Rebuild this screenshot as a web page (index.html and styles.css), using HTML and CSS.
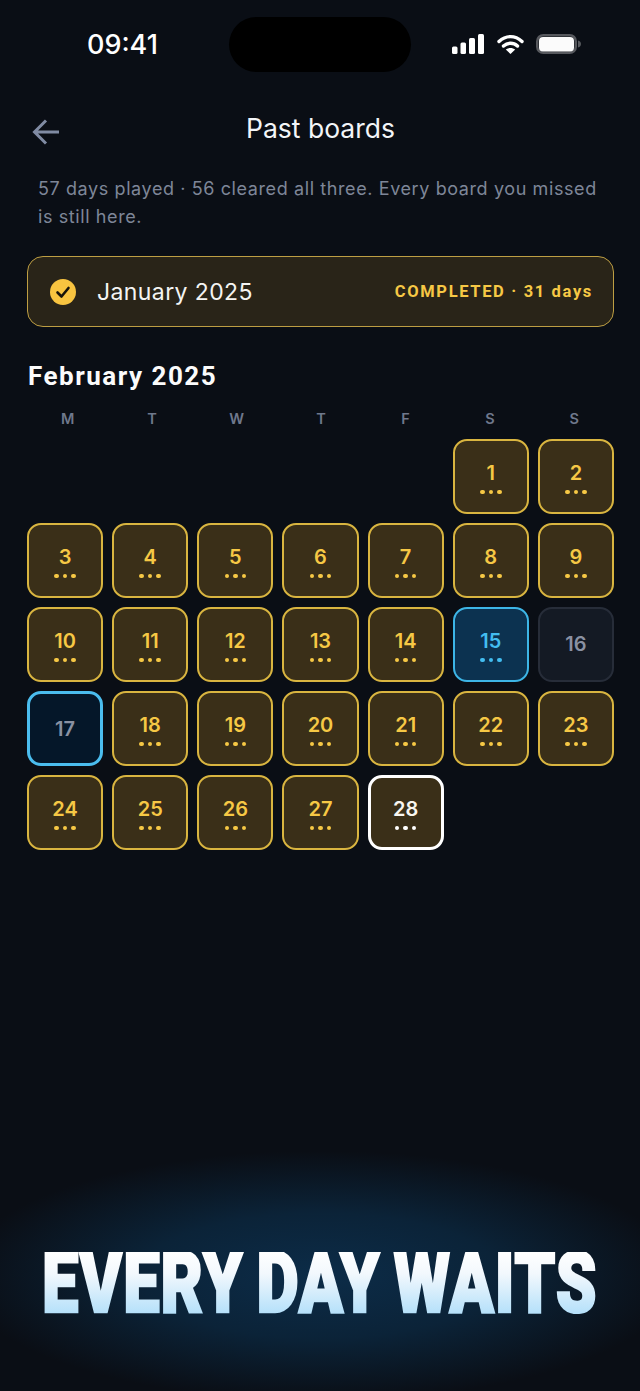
FILE: index.html
```html
<!DOCTYPE html>
<html lang="en">
<head>
<meta charset="utf-8">
<title>Past boards</title>
<link rel="stylesheet" href="styles.css">
</head>
<body>
<main class="screen">
  <header class="status">
    <span class="time">09:41</span>
    <span class="island"></span>
    <span class="status-icons">
      <svg class="sig" viewBox="0 0 32 20" width="32" height="20"><rect x="0" y="12.500" width="5.500" height="7.500" rx="1.500"/><rect x="8.500" y="8.500" width="5.500" height="11.500" rx="1.500"/><rect x="17" y="4" width="6" height="16" rx="1.500"/><rect x="26" y="0" width="6" height="20" rx="1.500"/></svg>
      <svg class="wifi" viewBox="0 0 27 20" width="27" height="20"><path d="M2 7.500C9 1 18 1 25 7.500"/><path d="M6.500 12C10.500 8.300 16.500 8.300 20.500 12"/><path class="wifi-dot" d="M13.500 20 8.800 15.600C11.500 13.300 15.500 13.300 18.200 15.600Z"/></svg>
      <svg class="batt" viewBox="0 0 45 20" width="45" height="20"><rect class="batt-shell" x="1.250" y="1.250" width="38.500" height="17.500" rx="6"/><rect class="batt-fill" x="3" y="3" width="35" height="14.500" rx="4"/><path class="batt-cap" d="M42 6.500v7c1.800-.5 3-1.800 3-3.500s-1.200-3-3-3.500z"/></svg>
    </span>
  </header>

  <nav class="nav">
    <svg class="back" viewBox="0 0 30 30" width="30" height="30"><path d="M28 15H4M15 3.500 3.500 15 15 26.500"/></svg>
    <h1 class="title">Past boards</h1>
  </nav>

  <p class="intro">57 days played · 56 cleared all three. Every board you missed is still here.</p>

  <section class="banner">
    <svg class="tick" viewBox="0 0 26 26" width="26" height="26"><circle cx="13" cy="13" r="13"/><path d="M7.500 13.500 11.500 17.500 18.500 9"/></svg>
    <span class="banner-month">January 2025</span>
    <span class="banner-state">COMPLETED · 31 days</span>
  </section>

  <h2 class="month">February 2025</h2>

  <div class="weekdays">
    <span>M</span><span>T</span><span>W</span><span>T</span><span>F</span><span>S</span><span>S</span>
  </div>

  <div class="grid">
    <div class="gap"></div><div class="gap"></div><div class="gap"></div><div class="gap"></div><div class="gap"></div>
    <div class="day"><b>1</b><i class="dots"><u></u><u></u><u></u></i></div>
    <div class="day"><b>2</b><i class="dots"><u></u><u></u><u></u></i></div>
    <div class="day"><b>3</b><i class="dots"><u></u><u></u><u></u></i></div>
    <div class="day"><b>4</b><i class="dots"><u></u><u></u><u></u></i></div>
    <div class="day"><b>5</b><i class="dots"><u></u><u></u><u></u></i></div>
    <div class="day"><b>6</b><i class="dots"><u></u><u></u><u></u></i></div>
    <div class="day"><b>7</b><i class="dots"><u></u><u></u><u></u></i></div>
    <div class="day"><b>8</b><i class="dots"><u></u><u></u><u></u></i></div>
    <div class="day"><b>9</b><i class="dots"><u></u><u></u><u></u></i></div>
    <div class="day"><b>10</b><i class="dots"><u></u><u></u><u></u></i></div>
    <div class="day"><b>11</b><i class="dots"><u></u><u></u><u></u></i></div>
    <div class="day"><b>12</b><i class="dots"><u></u><u></u><u></u></i></div>
    <div class="day"><b>13</b><i class="dots"><u></u><u></u><u></u></i></div>
    <div class="day"><b>14</b><i class="dots"><u></u><u></u><u></u></i></div>
    <div class="day blue"><b>15</b><i class="dots"><u></u><u></u><u></u></i></div>
    <div class="day idle"><b>16</b></div>
    <div class="day idle selected"><b>17</b></div>
    <div class="day"><b>18</b><i class="dots"><u></u><u></u><u></u></i></div>
    <div class="day"><b>19</b><i class="dots"><u></u><u></u><u></u></i></div>
    <div class="day"><b>20</b><i class="dots"><u></u><u></u><u></u></i></div>
    <div class="day"><b>21</b><i class="dots"><u></u><u></u><u></u></i></div>
    <div class="day"><b>22</b><i class="dots"><u></u><u></u><u></u></i></div>
    <div class="day"><b>23</b><i class="dots"><u></u><u></u><u></u></i></div>
    <div class="day"><b>24</b><i class="dots"><u></u><u></u><u></u></i></div>
    <div class="day"><b>25</b><i class="dots"><u></u><u></u><u></u></i></div>
    <div class="day"><b>26</b><i class="dots"><u></u><u></u><u></u></i></div>
    <div class="day"><b>27</b><i class="dots"><u></u><u></u><u></u></i></div>
    <div class="day today"><b>28</b><i class="dots"><u></u><u></u><u></u></i></div>
  </div>

  <footer class="promo">
    <span class="promo-text">EVERY DAY WAITS</span>
  </footer>
</main>
</body>
</html>
```

FILE: styles.css
```css
* { box-sizing: border-box; margin: 0; padding: 0; }
html, body { height: 100%; }
body {
  background: #0a0e15;
  font-family: Inter, "Liberation Sans", sans-serif;
  color: #fff;
  overflow: hidden;
}
.screen {
  height: 1391px;
  display: flex;
  flex-direction: column;
  padding: 17px 26px 0 27px;
}
.status {
  display: flex;
  align-items: center;
  height: 55px;
  flex: none;
}
.time {
  width: 202px;
  padding-left: 60px;
  font-size: 27px;
  font-weight: 500;
}
.island {
  width: 182px;
  height: 55px;
  border-radius: 28px;
  background: #000;
}
.status-icons {
  display: flex;
  align-items: center;
  gap: 12.500px;
  margin-left: 41px;
  margin-top: -1px;
}
.sig { fill: #fff; }
.wifi { fill: none; stroke: #fff; stroke-width: 3.400; stroke-linecap: round; }
.wifi-dot { fill: #fff; stroke: none; }
.batt-shell { fill: none; stroke: #56585d; stroke-width: 2.500; }
.batt-fill { fill: #fbfbfb; }
.batt-cap { fill: #56585d; }
.nav {
  position: relative;
  height: 40px;
  margin-top: 37px;
  padding-bottom: 2px;
  flex: none;
  display: flex;
  align-items: center;
  justify-content: center;
}
.title {
  font-size: 26.500px;
  font-weight: 400;
  line-height: 38px;
  color: #f3f5f8;
}
.back {
  position: absolute;
  left: 4px;
  top: 8px;
  fill: none;
  stroke: #808ba3;
  stroke-width: 3;
}
.intro {
  margin-top: 26px;
  padding: 0 10px 0 11px;
  font-size: 18px;
  line-height: 28px;
  letter-spacing: 0.6px;
  color: #7e8698;
  flex: none;
}
.banner {
  margin-top: 25px;
  height: 71px;
  flex: none;
  display: flex;
  align-items: center;
  border: 1.500px solid #bd9e43;
  border-radius: 16px;
  background: #292418;
  padding: 0 20px 0 22px;
}
.tick circle { fill: #f8c440; }
.tick path { fill: none; stroke: #17130a; stroke-width: 2.600; stroke-linecap: round; stroke-linejoin: round; }
.banner-month {
  margin-left: 21px;
  font-size: 23px;
  letter-spacing: 0.4px;
  color: #f4f4f2;
}
.banner-state {
  margin-left: auto;
  font-family: Roboto, sans-serif;
  font-size: 16.500px;
  font-weight: 700;
  letter-spacing: 1.650px;
  color: #f6c845;
}
.month {
  margin-top: 33px;
  margin-left: 1px;
  font-family: Roboto, sans-serif;
  font-size: 26px;
  font-weight: 700;
  letter-spacing: 1.500px;
  line-height: 32px;
  color: #fbfbfb;
  flex: none;
}
.weekdays {
  margin-top: 17px;
  padding: 0 2px 0 3px;
  display: grid;
  grid-template-columns: repeat(7, 1fr);
  column-gap: 9px;
  flex: none;
  font-size: 14.500px;
  font-weight: 600;
  line-height: 20px;
  color: #6f788c;
  text-align: center;
}
.grid {
  margin-top: 9.500px;
  display: grid;
  grid-template-columns: repeat(7, 1fr);
  grid-auto-rows: 75.600px;
  gap: 8.500px 9px;
  flex: none;
}
.day {
  border: 2px solid #d9b540;
  border-radius: 14px;
  background: #3a2f18;
  color: #f6c845;
  display: flex;
  flex-direction: column;
  align-items: center;
  justify-content: center;
}
.day b {
  font-size: 20px;
  font-weight: 600;
  line-height: 24px;
}
.dots {
  display: flex;
  gap: 4px;
  margin-top: 5px;
  margin-bottom: -2px;
}
.dots u {
  width: 4.500px;
  height: 4.500px;
  border-radius: 50%;
  background: currentColor;
}
.blue { border-color: #3db5e6; background: #0c3250; color: #43bdf0; }
.idle { border-color: #272d39; background: #141a24; color: #8a91a2; }
.selected { border: 3px solid #4bbdee; background: #051729; }
.today { border: 3px solid #fff; color: #fff; }
.today b { color: #f8f6f0; }
.promo {
  position: absolute;
  left: 0;
  right: 0;
  bottom: 0;
  height: 240px;
  background: radial-gradient(ellipse 360px 125px at 50% 52%, #0c2c48 0%, #0b2338 50%, rgba(10, 14, 21, 0) 100%);
  display: flex;
  justify-content: center;
}
.promo-text {
  margin-top: 101px;
  height: 62px;
  display: block;
  font-family: Roboto, sans-serif;
  font-weight: 900;
  font-size: 85px;
  line-height: 62px;
  letter-spacing: 1px;
  word-spacing: -6px;
  white-space: nowrap;
  background: linear-gradient(180deg, #ffffff 0%, #f2f8fd 35%, #b4e0fa 100%);
  -webkit-background-clip: text;
  background-clip: text;
  color: transparent;
  -webkit-text-stroke: 2.500px transparent;
  transform: scaleX(0.768);
}
```
